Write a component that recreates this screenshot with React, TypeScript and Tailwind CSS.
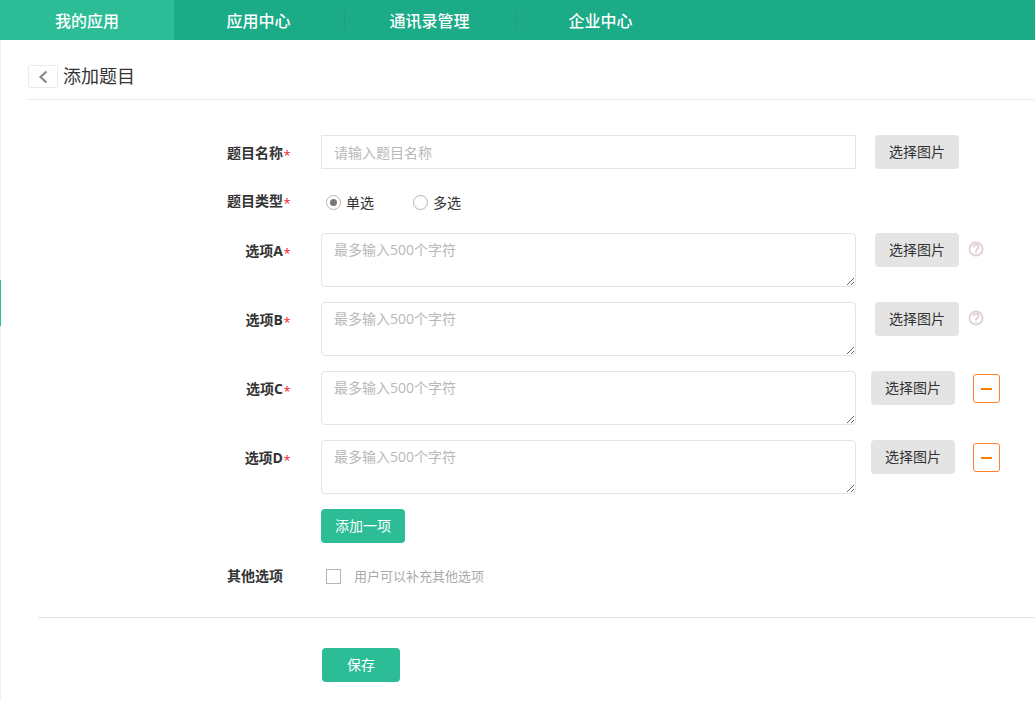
const navItems = ["我的应用", "应用中心", "通讯录管理", "企业中心"];

const options = [
    { label: "选项A", help: true, offset: false },
    { label: "选项B", help: true, offset: false },
    { label: "选项C", help: false, offset: true },
    { label: "选项D", help: false, offset: true },
];

function FieldLabel({ text, star = true }: { text: string; star?: boolean }) {
    return (
        <div className="w-[72px] shrink-0 text-right text-[14px] leading-[20px] font-bold text-[#333]">
            {text}
            <span className="inline-block w-[8px] text-center align-[-2px] text-[13px] text-[#f5222d] font-normal">{star ? "*" : ""}</span>
        </div>
    );
}

function ImageButton({ className = "" }: { className?: string }) {
    return (
        <button className={`h-[34px] w-[84px] shrink-0 rounded-[4px] bg-[#e4e4e4] pb-[2px] text-[14px] text-[#333] ${className}`}>
            选择图片
        </button>
    );
}

function HelpIcon() {
    return (
        <svg viewBox="0 0 16 16" className="ml-[9px] mt-[8px] h-[16px] w-[16px] shrink-0" fill="none" stroke="#dccfcf" strokeWidth="1.7">
            <circle cx="8" cy="8" r="6.6" />
            <path d="M5.4 6.2c0-1.5 1.1-2.5 2.6-2.5s2.6 1 2.6 2.3c0 2-2.6 1.9-2.6 4" />
            <path d="M8 10.8v1.6" />
        </svg>
    );
}

export default function App() {
    return (
        <div className="flex h-[701px] w-full flex-col overflow-hidden bg-white font-['Open_Sans','Noto_Sans_CJK_SC',sans-serif]">
            {/* top nav */}
            <div className="flex h-[40px] shrink-0 items-center bg-[#1bab87] text-[16px] font-medium text-white">
                {navItems.map((item, i) => (
                    <div key={item} className="flex h-full items-center">
                        <div className={`flex h-full items-center justify-center pt-[2px] ${i === 0 ? "w-[174px] bg-[#2cbd97]" : "w-[170px] pr-px"}`}>
                            {item}
                        </div>
                        {i > 0 && i < 3 && <div className="h-[18px] w-px bg-[#17a280]" />}
                    </div>
                ))}
            </div>

            <div className="flex min-h-0 flex-1">
                {/* left edge strip */}
                <div className="w-px shrink-0 bg-[#eceff3]">
                    <div className="mt-[240px] h-[46px] bg-[#2cbd97]" />
                </div>

                <div className="min-w-0 flex-1 pl-[27px]">
                    <div className="flex h-[60px] items-start border-b border-[#ebebeb] pt-[25px]">
                        <button className="flex h-[23px] w-[30px] items-center justify-center rounded-[2px] border border-[#ebebeb]">
                            <svg viewBox="0 0 10 14" className="h-[14px] w-[10px]" fill="none" stroke="#888" strokeWidth="2.2">
                                <path d="M8.5 1.5 2.5 7l6 5.5" />
                            </svg>
                        </button>
                        <h1 className="ml-[5px] text-[18px] leading-[23px] text-[#333]">添加题目</h1>
                    </div>

                    <div className="pl-[191px] pt-[35px]">
                        {/* name */}
                        <div className="flex">
                            <div className="pt-[8px] pr-[30px]"><FieldLabel text="题目名称" /></div>
                            <input
                                placeholder="请输入题目名称"
                                className="h-[34px] w-[535px] shrink-0 border border-[#e4e4e4] px-[12px] text-[14px] outline-none placeholder:text-[#b8b8b8]"
                            />
                            <ImageButton className="ml-[19px]" />
                        </div>

                        {/* type */}
                        <div className="mt-[23px] flex h-[20px] items-center">
                            <div className="pr-[30px]"><FieldLabel text="题目类型" /></div>
                            <label className="ml-[5px] flex items-center text-[14px] text-[#333]">
                                <span className="flex h-[15px] w-[15px] items-center justify-center rounded-full border border-[#b5b5b5]">
                                    <span className="h-[7px] w-[7px] rounded-full bg-[#777]" />
                                </span>
                                <span className="ml-[5px]">单选</span>
                            </label>
                            <label className="ml-[39px] flex items-center text-[14px] text-[#333]">
                                <span className="h-[15px] w-[15px] rounded-full border border-[#b5b5b5]" />
                                <span className="ml-[5px]">多选</span>
                            </label>
                        </div>

                        {/* options */}
                        <div className="mt-[21px] flex flex-col gap-[15px]">
                            {options.map((o) => (
                                <div key={o.label} className="flex">
                                    <div className="pt-[8px] pr-[30px]"><FieldLabel text={o.label} /></div>
                                    <textarea
                                        placeholder="最多输入500个字符"
                                        className="h-[54px] w-[535px] shrink-0 rounded-[4px] border border-[#e4e4e4] px-[12px] py-[5px] text-[14px] outline-none placeholder:text-[#b8b8b8]"
                                    />
                                    <ImageButton className={o.offset ? "ml-[15px]" : "ml-[19px]"} />
                                    {o.help && <HelpIcon />}
                                    {o.offset && (
                                        <button className="ml-[18px] mt-[3px] flex h-[29px] w-[27px] shrink-0 items-center justify-center rounded-[3px] border border-[#ff8030]">
                                            <span className="h-[2px] w-[11px] bg-[#ff7e00]" />
                                        </button>
                                    )}
                                </div>
                            ))}
                        </div>

                        <button className="ml-[102px] mt-[15px] block h-[34px] w-[84px] rounded-[4px] bg-[#2cbd97] pb-[2px] text-[14px] text-white">
                            添加一项
                        </button>

                        {/* other */}
                        <div className="mt-[23px] flex h-[20px] items-center">
                            <div className="pr-[30px]"><FieldLabel text="其他选项" star={false} /></div>
                            <span className="ml-[5px] h-[15px] w-[15px] border border-[#b5b5b5]" />
                            <span className="ml-[13px] pt-[2px] text-[13px] text-[#aaa]">用户可以补充其他选项</span>
                        </div>
                    </div>

                    <div className="ml-[10px] mt-[31px] border-t border-[#e4e4e4] pl-[284px] pt-[30px]">
                        <button className="h-[34px] w-[78px] rounded-[4px] bg-[#2cbd97] pb-[2px] text-[14px] text-white">保存</button>
                    </div>
                </div>
            </div>
        </div>
    );
}
